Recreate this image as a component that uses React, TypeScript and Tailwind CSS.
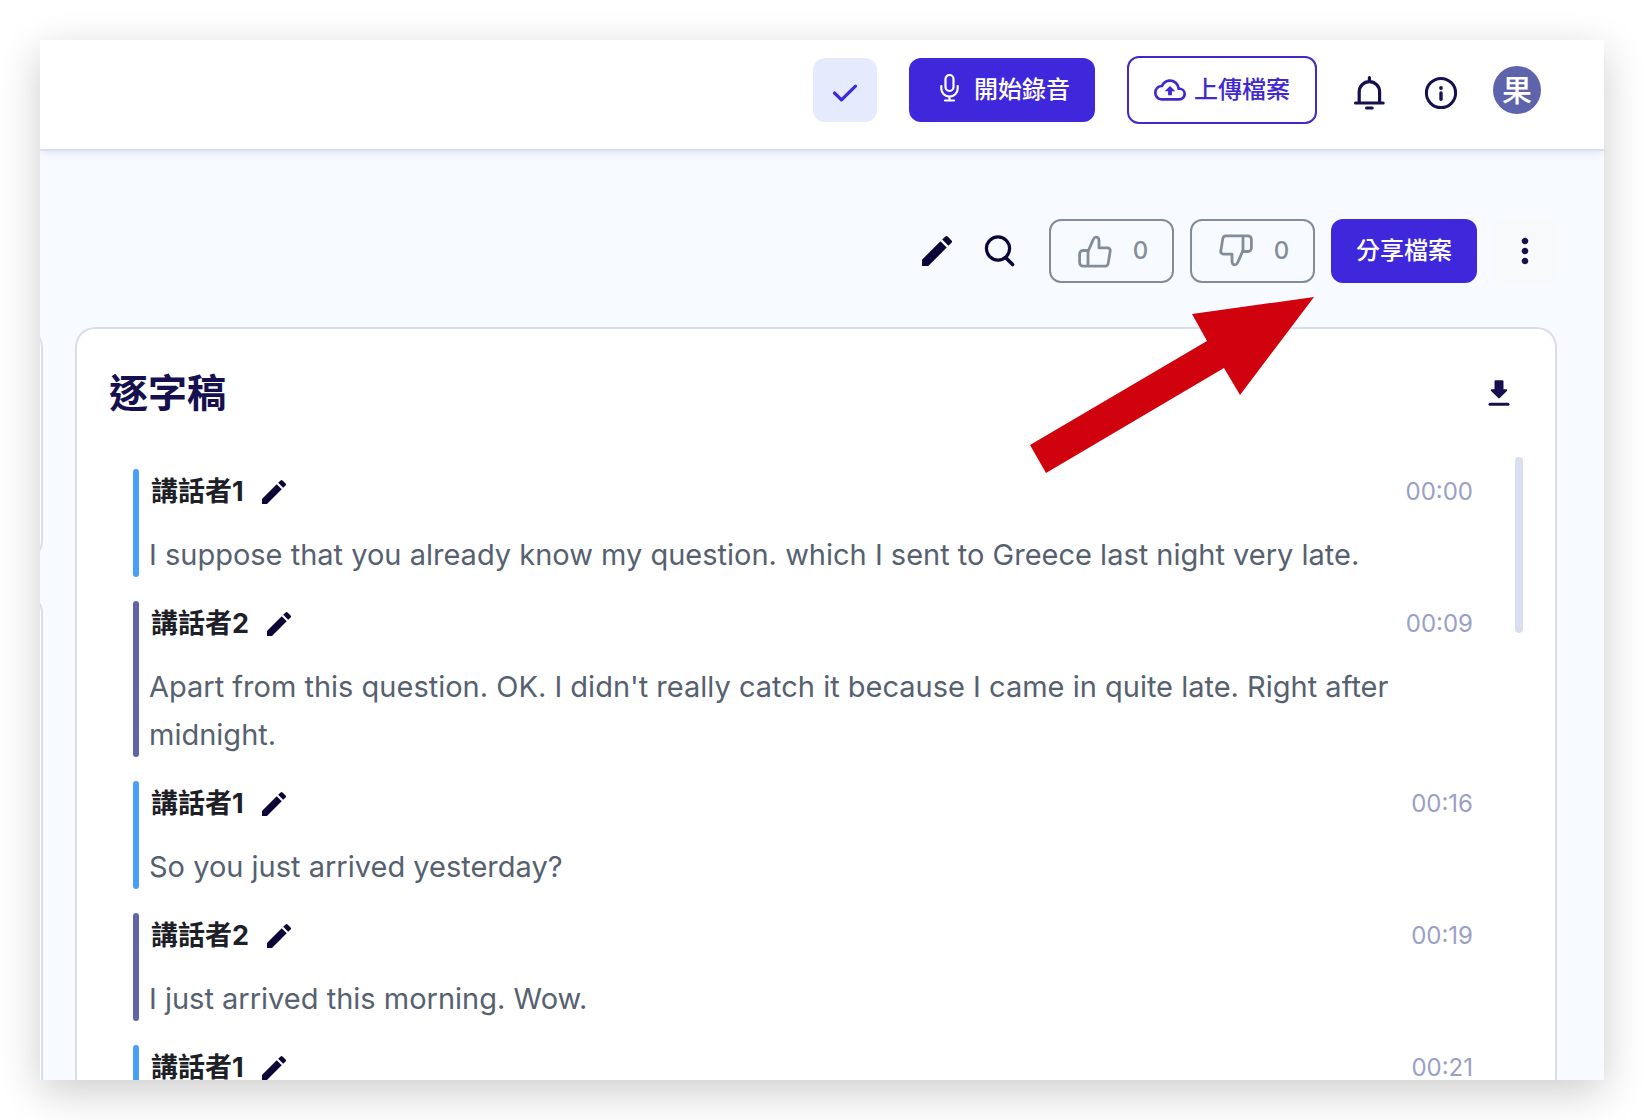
import React from 'react';
import { MdEdit, MdMoreVert, MdOutlineCloudUpload } from 'react-icons/md';

interface Segment {
  speaker: 1 | 2;
  time: string;
  text: string;
}

const SEGMENTS: Segment[] = [
  { speaker: 1, time: '00:00', text: 'I suppose that you already know my question. which I sent to Greece last night very late.' },
  { speaker: 2, time: '00:09', text: "Apart from this question. OK. I didn't really catch it because I came in quite late. Right after midnight." },
  { speaker: 1, time: '00:16', text: 'So you just arrived yesterday?' },
  { speaker: 2, time: '00:19', text: 'I just arrived this morning. Wow.' },
  { speaker: 1, time: '00:21', text: '' },
];

const CheckIcon = () => (
  <svg width="32" height="32" viewBox="0 0 32 32" fill="none" stroke="currentColor" strokeWidth="3.2" strokeLinecap="round" strokeLinejoin="round">
    <path d="M5.5 19l7 6.8L26.5 12.200" />
  </svg>
);

const MicIcon = () => (
  <svg width="32" height="32" viewBox="0 0 32 32" fill="none" stroke="currentColor" strokeWidth="2.2" strokeLinecap="round" strokeLinejoin="round">
    <rect x="11.500" y="1" width="8" height="16" rx="4" />
    <path d="M7.3 12v2.5a8.2 8.2 0 0 0 16.4 0V12M15.500 22.7v3.8M11 26.5h9" />
  </svg>
);

const BellIcon = () => (
  <svg width="40" height="40" viewBox="0 0 40 40" fill="none" stroke="currentColor" strokeWidth="3.2" strokeLinecap="round" strokeLinejoin="round">
    <path d="M20.400 7.5v4M10.200 32V21.800a10.200 10.200 0 0 1 20.400 0V32M6.5 33h27.600" />
    <path d="M17.6 38h5.6" />
  </svg>
);

const InfoIcon = () => (
  <svg width="40" height="40" viewBox="0 0 40 40" fill="none" stroke="currentColor" strokeWidth="3" strokeLinecap="round">
    <circle cx="20" cy="23" r="14.6" />
    <path d="M20 23v6.200" strokeWidth="3.4" />
    <circle cx="20" cy="18" r="1.9" fill="currentColor" stroke="none" />
  </svg>
);

const SearchIcon = () => (
  <svg width="40" height="40" viewBox="0 0 40 40" fill="none" stroke="currentColor" strokeWidth="3.2" strokeLinecap="round">
    <circle cx="17" cy="17.500" r="11.6" />
    <path d="M24.8 26.8l6.8 6.8" strokeWidth="3.6" />
  </svg>
);

const ThumbIcon = ({ className = '' }: { className?: string }) => (
  <svg className={className} width="40" height="40" viewBox="0 0 40 40" fill="none" stroke="currentColor" strokeWidth="2.8" strokeLinejoin="round" strokeLinecap="round">
    <path d="M13 35.2V20.500l5.4-12.2c.5-1.1 1.2-2.1 2.5-2.1 2.1 0 3.1 1.5 3.1 3.6v7.1h8.7c1.7 0 2.8 1.4 2.5 3l-2 12.5c-.3 1.7-1.4 2.8-3 2.8H8.2a3.6 3.6 0 0 1-3.6-3.6V22.900a3.400 3.400 0 0 1 3.400-3.400h5.600" />
  </svg>
);

const DownloadIcon = () => (
  <svg width="32" height="32" viewBox="0 0 32 32" fill="currentColor" stroke="currentColor" strokeLinejoin="round" strokeLinecap="round">
    <path d="M12.500 4.300h7v8.900h3.700L16 20.400l-7.200-7.200h3.700z" strokeWidth="2" />
    <path d="M7 27.300h18" strokeWidth="3" />
  </svg>
);

const PointerArrow = () => (
  <svg className="absolute top-[257px] right-[290px] pointer-events-none" width="284" height="178" viewBox="0 0 284 178" fill="#d0020d">
    <polygon points="284,0 162,17 177,44 0,148 16,176 194,71 210,98" />
  </svg>
);

const VoteButton = ({ label, down, count }: { label: string; down?: boolean; count: number }) => (
  <button aria-label={label} className="flex h-16 w-[125px] items-center justify-center gap-[18px] rounded-xl border-2 border-[#838d99] text-2xl font-medium text-[#838d99]">
    <ThumbIcon className={down ? 'rotate-180' : ''} />
    <span>{count}</span>
  </button>
);

const TranscriptRow = ({ segment }: { segment: Segment }) => (
  <li className="flex gap-2.5">
    <div className={`w-1.5 shrink-0 rounded-full ${segment.speaker === 1 ? 'bg-[#499ff8]' : 'bg-[#6065a8]'}`} />
    <div className="min-w-0 flex-1">
      <div className="flex h-[46px] items-center pl-0.5">
        <span className="text-[27px] font-bold text-[#1d2026]">講話者{segment.speaker}</span>
        <button aria-label="編輯講話者" className="ml-3.5 text-[#0c0537]">
          <MdEdit size={32} />
        </button>
        <time className="ml-auto text-2xl text-[#9a9fc8]">{segment.time}</time>
      </div>
      <p className="mt-4 -mb-0.5 min-h-12 text-[29px] leading-[48px] text-[#566170]">{segment.text}</p>
    </div>
  </li>
);

export default function App() {
  return (
    <div className="h-screen bg-white p-10 font-['Inter','Noto_Sans_CJK_TC',sans-serif]">
      <div className="relative flex h-full flex-col overflow-hidden bg-[#f7fbff] shadow-[0_12px_40px_rgba(0,0,0,0.2)]">
        <header className="z-10 flex shrink-0 items-center justify-end gap-8 border-b-2 border-[#d9dfee] bg-white pt-4 pr-[63px] pb-[25px] text-[#17104f] shadow-[0_2px_8px_rgba(90,100,170,0.14)]">
          <button aria-label="完成" className="flex size-16 items-center justify-center rounded-xl bg-[#e5ebfc] text-[#3f27dc]">
            <CheckIcon />
          </button>
          <button className="flex h-16 w-[186px] items-center justify-center gap-2 rounded-xl bg-[#3f27dc] text-2xl font-medium text-white">
            <MicIcon />
            開始錄音
          </button>
          <button className="flex h-[68px] w-[190px] items-center justify-center gap-2 rounded-xl border-2 border-[#4029c8] text-2xl font-medium text-[#4029d0]">
            <MdOutlineCloudUpload size={32} />
            上傳檔案
          </button>
          <button aria-label="通知">
            <BellIcon />
          </button>
          <button aria-label="資訊">
            <InfoIcon />
          </button>
          <button className="flex size-12 items-center justify-center rounded-full bg-[#5e64ab] text-3xl font-medium text-white">果</button>
        </header>

        <main className="flex min-h-0 flex-1 flex-col pr-[47px]">
          <div className="flex items-center justify-end gap-4 pt-17 pb-11 text-[#17104f]">
            <div className="flex text-[#0c0537]">
              <button aria-label="編輯" className="flex size-16 items-center justify-center">
                <MdEdit size={40} />
              </button>
              <button aria-label="搜尋" className="flex size-16 items-center justify-center">
                <SearchIcon />
              </button>
            </div>
            <VoteButton label="讚" count={0} />
            <VoteButton label="倒讚" count={0} down />
            <button className="h-16 w-[146px] rounded-xl bg-[#3f27dc] text-2xl font-medium text-white">分享檔案</button>
            <button aria-label="更多" className="flex size-16 items-center justify-center rounded-xl bg-[#f8f9fb]">
              <MdMoreVert size={40} />
            </button>
          </div>

          <div className="flex min-h-0 flex-1 gap-8">
            {/* right edge of the neighbouring column */}
            <div className="flex w-[3px] shrink-0 flex-col items-end gap-8">
              <div className="h-[234px] w-80 shrink-0 rounded-[20px] border-2 border-[#d9dcec] bg-white" />
              <div className="w-80 flex-1 rounded-t-[20px] border-2 border-b-0 border-[#d9dcec] bg-white" />
            </div>

            <section className="flex min-w-0 flex-1 flex-col rounded-t-[20px] border-2 border-b-0 border-[#d9dcec] bg-white px-8">
              <div className="flex h-32 shrink-0 items-center justify-between pr-2">
                <h2 className="text-[39px] font-bold text-[#17104f]">逐字稿</h2>
                <button aria-label="下載" className="text-[#17104f]">
                  <DownloadIcon />
                </button>
              </div>
              <div className="flex min-h-0 flex-1 gap-[42px] overflow-hidden">
                <ul className="flex min-w-0 flex-1 flex-col gap-6 pt-3 pl-6">
                  {SEGMENTS.map((segment) => (
                    <TranscriptRow key={segment.time} segment={segment} />
                  ))}
                </ul>
                <div className="h-44 w-2 rounded-full bg-[#d9dfee]" />
              </div>
            </section>
          </div>
        </main>

        <PointerArrow />
      </div>
    </div>
  );
}
